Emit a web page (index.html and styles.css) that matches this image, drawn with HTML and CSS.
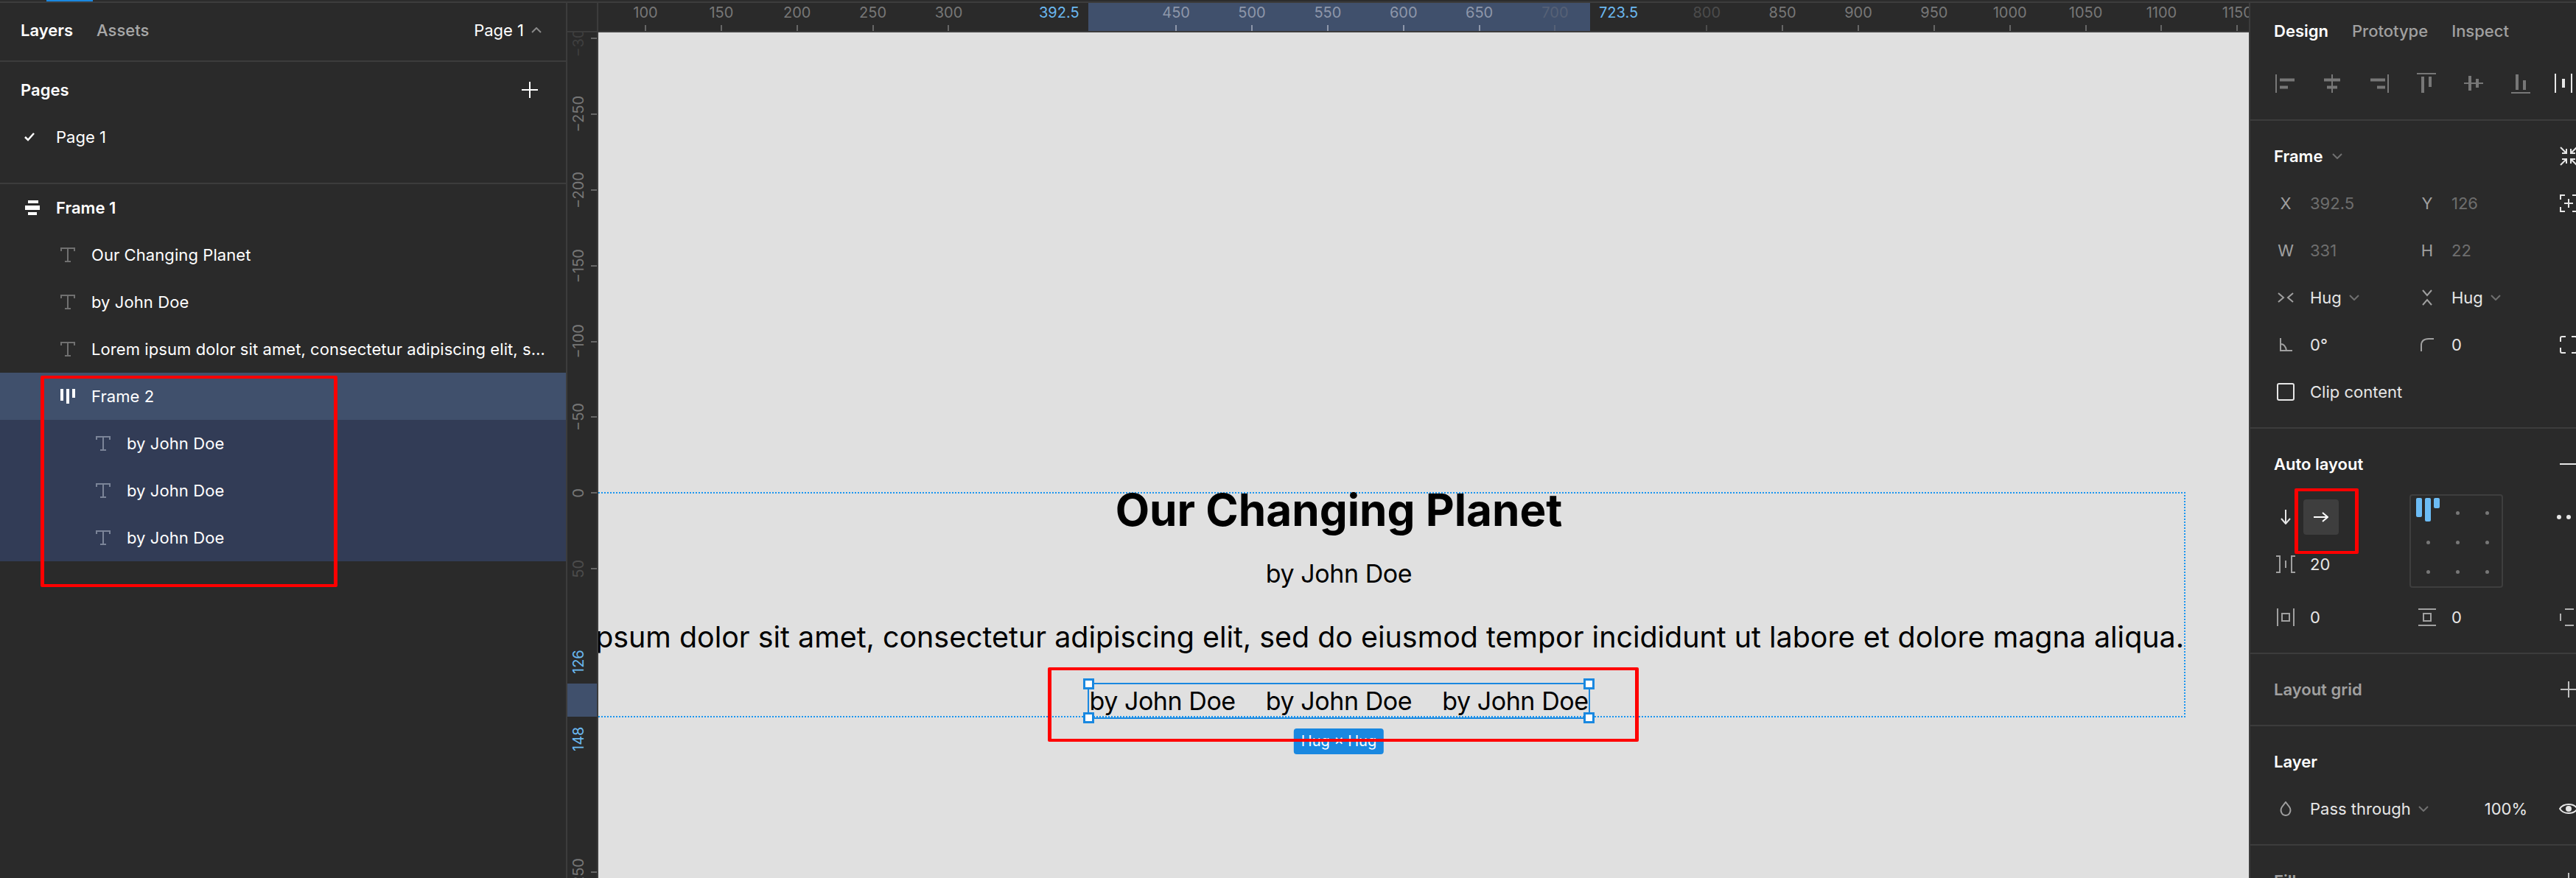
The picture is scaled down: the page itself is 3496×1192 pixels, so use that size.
FILE: index.html
```html
<!DOCTYPE html>
<html lang="en">
<head>
    <meta charset="UTF-8">
    <title>Auto layout - Frame 2</title>
    <link rel="stylesheet" href="styles.css">
</head>
<body>

<svg class="sprites" width="0" height="0">
    <symbol id="ico-t" viewBox="0 0 20 20"><path d="M1 5V1H19V5M10 1V19M6 19H14" fill="none" stroke="currentColor" stroke-width="2"/></symbol>
    <symbol id="ico-chev" viewBox="0 0 14 8"><path d="M1 1L7 7L13 1" fill="none" stroke="currentColor" stroke-width="2"/></symbol>
    <symbol id="ico-plus" viewBox="0 0 22 22"><path d="M11 0V22M0 11H22" fill="none" stroke="currentColor" stroke-width="2"/></symbol>
</svg>

<div class="app">
    <div class="topline"><div class="topline-tab"></div></div>

    <div class="main">
        <!-- left panel -->
        <aside class="left-panel">
            <div class="left-tabs">
                <span class="tab-active">Layers</span>
                <span class="tab-dim">Assets</span>
                <span class="page-pick">Page 1
                    <svg class="caret" width="14" height="8"><use href="#ico-chev" transform="rotate(180 7 4)"/></svg>
                </span>
            </div>

            <div class="pages">
                <div class="pages-head">
                    <span class="tab-active">Pages</span>
                    <svg class="pages-add" width="22" height="22"><use href="#ico-plus"/></svg>
                </div>
                <div class="layer-row">
                    <svg class="check" width="16" height="12" viewBox="0 0 16 12"><path d="M2 6L6 10L14 1" fill="none" stroke="#fff" stroke-width="2.5"/></svg>
                    <span>Page 1</span>
                </div>
            </div>

            <div class="layer-row layer-root">
                <svg class="row-ico" width="20" height="20" viewBox="0 0 20 20"><path d="M4 0H18V4H4ZM0 7H20V13H0ZM4 16H16V20H4Z" fill="#fff"/></svg>
                <span class="tab-active">Frame 1</span>
            </div>
            <div class="layer-row depth-1"><svg class="row-ico t-ico" width="20" height="20"><use href="#ico-t"/></svg><span class="layer-name">Our Changing Planet</span></div>
            <div class="layer-row depth-1"><svg class="row-ico t-ico" width="20" height="20"><use href="#ico-t"/></svg><span class="layer-name">by John Doe</span></div>
            <div class="layer-row depth-1"><svg class="row-ico t-ico" width="20" height="20"><use href="#ico-t"/></svg><span class="layer-name">Lorem ipsum dolor sit amet, consectetur adipiscing elit, sed do eiusmod tempor</span></div>
            <div class="layer-row depth-1 row-selected">
                <svg class="row-ico" width="20" height="20" viewBox="0 0 20 20"><path d="M0 0H4V16H0ZM8 0H12V20H8ZM16 0H20V12H16Z" fill="#fff"/></svg>
                <span class="layer-name">Frame 2</span>
            </div>
            <div class="layer-row depth-2 row-child"><svg class="row-ico t-ico" width="20" height="20"><use href="#ico-t"/></svg><span class="layer-name">by John Doe</span></div>
            <div class="layer-row depth-2 row-child"><svg class="row-ico t-ico" width="20" height="20"><use href="#ico-t"/></svg><span class="layer-name">by John Doe</span></div>
            <div class="layer-row depth-2 row-child"><svg class="row-ico t-ico" width="20" height="20"><use href="#ico-t"/></svg><span class="layer-name">by John Doe</span></div>
        </aside>

        <!-- rulers and canvas -->
        <section class="center">
            <div class="ruler-top">
                <div class="ruler-corner"></div>
                <div class="ruler-band"></div>
                <span class="ruler-sel sel-start">392.5</span>
                <span class="ruler-sel sel-end">723.5</span>
                <div class="rt-cell"><span>100</span><i></i></div>
                <div class="rt-cell"><span>150</span><i></i></div>
                <div class="rt-cell"><span>200</span><i></i></div>
                <div class="rt-cell"><span>250</span><i></i></div>
                <div class="rt-cell"><span>300</span><i></i></div>
                <div class="rt-cell rt-empty"></div>
                <div class="rt-cell rt-empty"></div>
                <div class="rt-cell in-band"><span>450</span><i></i></div>
                <div class="rt-cell in-band"><span>500</span><i></i></div>
                <div class="rt-cell in-band"><span>550</span><i></i></div>
                <div class="rt-cell in-band"><span>600</span><i></i></div>
                <div class="rt-cell in-band"><span>650</span><i></i></div>
                <div class="rt-cell in-band faded"><span>700</span><i></i></div>
                <div class="rt-cell rt-empty"></div>
                <div class="rt-cell faded"><span>800</span><i></i></div>
                <div class="rt-cell"><span>850</span><i></i></div>
                <div class="rt-cell"><span>900</span><i></i></div>
                <div class="rt-cell"><span>950</span><i></i></div>
                <div class="rt-cell"><span>1000</span><i></i></div>
                <div class="rt-cell"><span>1050</span><i></i></div>
                <div class="rt-cell"><span>1100</span><i></i></div>
                <div class="rt-cell"><span>1150</span><i></i></div>
            </div>

            <div class="center-body">
                <div class="ruler-left">
                    <div class="ruler-left-band"></div>
                    <span class="ruler-left-sel sel-126">126</span>
                    <span class="ruler-left-sel sel-148">148</span>
                    <div class="rl-cell rl-dimmest"><span>&minus;300</span><i></i></div>
                    <div class="rl-cell"><span>&minus;250</span><i></i></div>
                    <div class="rl-cell"><span>&minus;200</span><i></i></div>
                    <div class="rl-cell"><span>&minus;150</span><i></i></div>
                    <div class="rl-cell"><span>&minus;100</span><i></i></div>
                    <div class="rl-cell"><span>&minus;50</span><i></i></div>
                    <div class="rl-cell"><span>0</span><i></i></div>
                    <div class="rl-cell faded"><span>50</span><i></i></div>
                    <div class="rl-cell"></div>
                    <div class="rl-cell"></div>
                    <div class="rl-cell"></div>
                    <div class="rl-cell"><span>250</span><i></i></div>
                </div>

                <div class="canvas">
                    <div class="frame-one">
                        <div class="frame-title">Our Changing Planet</div>
                        <div class="frame-text">by John Doe</div>
                        <div class="frame-text frame-lorem">Lorem ipsum dolor sit amet, consectetur adipiscing elit, sed do eiusmod tempor incididunt ut labore et dolore magna aliqua.</div>
                        <div class="frame-two">
                            <span class="frame-text">by John Doe</span>
                            <span class="frame-text">by John Doe</span>
                            <span class="frame-text">by John Doe</span>
                            <b class="handle h-tl"></b>
                            <b class="handle h-tr"></b>
                            <b class="handle h-bl"></b>
                            <b class="handle h-br"></b>
                            <div class="size-badge">Hug × Hug</div>
                        </div>
                    </div>
                </div>
            </div>
        </section>

        <!-- right panel -->
        <aside class="right-panel">
            <div class="right-tabs">
                <span class="tab-active">Design</span>
                <span class="tab-soft">Prototype</span>
                <span class="tab-soft">Inspect</span>
            </div>

            <div class="align-bar section">
                <svg class="align-ico" width="28" height="28" viewBox="0 0 28 28"><path d="M1 2H3V27H1ZM7 7.500H27V11.500H7ZM7 17.500H18V21.500H7Z"/></svg>
                <svg class="align-ico" width="28" height="28" viewBox="0 0 28 28"><path d="M13 2H15V7.500H25V11.500H15V17.500H21V21.500H15V27H13V21.500H7V17.500H13V11.500H3V7.500H13Z"/></svg>
                <svg class="align-ico" width="28" height="28" viewBox="0 0 28 28"><path d="M25 2H27V27H25ZM2 7.500H22V11.500H2ZM11 17.500H22V21.500H11Z"/></svg>
                <svg class="align-ico" width="28" height="28" viewBox="0 0 28 28"><path d="M1 0H27V2H1ZM7 5H11V27H7ZM17 5H21V19H17Z"/></svg>
                <svg class="align-ico" width="28" height="28" viewBox="0 0 28 28"><path d="M1 13H7V4H11V13H17V8H21V13H27V15H21V20H17V15H11V24H7V15H1Z"/></svg>
                <svg class="align-ico" width="28" height="28" viewBox="0 0 28 28"><path d="M1 26H27V28H1ZM7 2H11V23H7ZM17 10H21V23H17Z"/></svg>
                <svg class="align-ico dist-ico" width="36" height="28" viewBox="0 0 36 28"><path d="M0 1H2V27H0ZM10 8H14V20H10ZM22 1H24V27H22ZM32 8H36V20H32Z"/></svg>
            </div>

            <div class="section">
                <div class="prop-row">
                    <div class="prop-cell span-two">
                        <span class="sec-title">Frame</span>
                        <svg class="chev title-chev" width="14" height="8"><use href="#ico-chev"/></svg>
                    </div>
                    <div class="ico-box">
                        <svg width="24" height="26" viewBox="0 0 24 26"><path d="M1 1L9 9M3 9H9V3M23 1L15 9M21 9H15V3M1 25L9 17M3 17H9V23M23 25L15 17M21 17H15V23" fill="none" stroke="#e6e6e6" stroke-width="2"/></svg>
                    </div>
                </div>
                <div class="prop-row">
                    <div class="prop-cell"><span class="ico-box ico-letter">X</span><span class="val-dim">392.5</span></div>
                    <div class="prop-cell"><span class="ico-box ico-letter">Y</span><span class="val-dim">126</span></div>
                    <div class="ico-box">
                        <svg width="24" height="24" viewBox="0 0 24 24"><path d="M1 7V1H7M17 1H23V7M1 17V23H7M17 23H23V17M12 6V18M6 12H18" fill="none" stroke="#e6e6e6" stroke-width="2"/></svg>
                    </div>
                </div>
                <div class="prop-row">
                    <div class="prop-cell"><span class="ico-box ico-letter">W</span><span class="val-dim">331</span></div>
                    <div class="prop-cell"><span class="ico-box ico-letter">H</span><span class="val-dim">22</span></div>
                </div>
                <div class="prop-row">
                    <div class="prop-cell">
                        <span class="ico-box"><svg width="22" height="14" viewBox="0 0 22 14"><path d="M1 1L8 7L1 13M21 1L14 7L21 13" fill="none" stroke="#a0a0a0" stroke-width="2"/></svg></span>
                        <span class="val">Hug</span>
                        <svg class="chev hug-chev" width="14" height="8"><use href="#ico-chev"/></svg>
                    </div>
                    <div class="prop-cell">
                        <span class="ico-box"><svg width="14" height="22" viewBox="0 0 14 22"><path d="M1 1L7 8L13 1M1 21L7 14L13 21" fill="none" stroke="#a0a0a0" stroke-width="2"/></svg></span>
                        <span class="val">Hug</span>
                        <svg class="chev hug-chev" width="14" height="8"><use href="#ico-chev"/></svg>
                    </div>
                </div>
                <div class="prop-row">
                    <div class="prop-cell">
                        <span class="ico-box"><svg width="18" height="18" viewBox="0 0 18 18"><path d="M2 0V17H18M2 8C6 8 9 11 10 17" fill="none" stroke="#a0a0a0" stroke-width="2"/></svg></span>
                        <span class="val">0°</span>
                    </div>
                    <div class="prop-cell">
                        <span class="ico-box"><svg width="18" height="18" viewBox="0 0 18 18"><path d="M1 18V10C1 4 5 1 11 1H18" fill="none" stroke="#a0a0a0" stroke-width="2"/></svg></span>
                        <span class="val">0</span>
                    </div>
                    <div class="ico-box">
                        <svg width="24" height="24" viewBox="0 0 24 24"><path d="M1 8V3Q1 1 3 1H8M16 1H21Q23 1 23 3V8M1 16V21Q1 23 3 23H8M16 23H21Q23 23 23 21V16" fill="none" stroke="#e6e6e6" stroke-width="2"/></svg>
                    </div>
                </div>
                <div class="prop-row">
                    <div class="prop-cell span-two">
                        <span class="ico-box"><span class="checkbox"></span></span>
                        <span class="val">Clip content</span>
                    </div>
                </div>
            </div>

            <div class="section">
                <div class="prop-row">
                    <div class="prop-cell span-two"><span class="sec-title">Auto layout</span></div>
                    <div class="ico-box"><svg width="24" height="2" viewBox="0 0 24 2"><path d="M0 0H24V2H0Z" fill="#e6e6e6"/></svg></div>
                </div>
                <div class="auto-body">
                    <div class="auto-left">
                        <div class="dir-row">
                            <span class="ico-box"><svg width="14" height="20" viewBox="0 0 14 20"><path d="M7 0V18M1 12L7 19L13 12" fill="none" stroke="#e6e6e6" stroke-width="2"/></svg></span>
                            <span class="dir-btn"><svg width="20" height="14" viewBox="0 0 20 14"><path d="M0 7H18M12 1L19 7L12 13" fill="none" stroke="#fff" stroke-width="2"/></svg></span>
                        </div>
                        <div class="prop-cell gap-cell">
                            <span class="ico-box"><svg width="26" height="24" viewBox="0 0 26 24"><path d="M0 1H5V23H0M26 1H21V23H26" fill="none" stroke="#a0a0a0" stroke-width="2"/><path d="M12 7H14V17H12Z" fill="#a0a0a0"/></svg></span>
                            <span class="val">20</span>
                        </div>
                    </div>
                    <div class="align-box">
                        <div class="align-cell cell-bars"><b class="bar-a"></b><b class="bar-b"></b><b class="bar-c"></b></div>
                        <div class="align-cell"><i></i></div>
                        <div class="align-cell"><i></i></div>
                        <div class="align-cell"><i></i></div>
                        <div class="align-cell"><i></i></div>
                        <div class="align-cell"><i></i></div>
                        <div class="align-cell"><i></i></div>
                        <div class="align-cell"><i></i></div>
                        <div class="align-cell"><i></i></div>
                    </div>
                    <div class="more-dots"><i></i><i></i><i></i></div>
                </div>
                <div class="prop-row pad-row">
                    <div class="prop-cell">
                        <span class="ico-box"><svg width="24" height="24" viewBox="0 0 24 24"><path d="M1 0V24M23 0V24M7 7H17V17H7Z" fill="none" stroke="#a0a0a0" stroke-width="2"/></svg></span>
                        <span class="val">0</span>
                    </div>
                    <div class="prop-cell">
                        <span class="ico-box"><svg width="24" height="24" viewBox="0 0 24 24"><path d="M0 1H24M0 23H24M7 7H17V17H7Z" fill="none" stroke="#a0a0a0" stroke-width="2"/></svg></span>
                        <span class="val">0</span>
                    </div>
                    <div class="ico-box">
                        <svg width="24" height="24" viewBox="0 0 24 24"><path d="M7 1H19M7 23H19M1 7V17M23 7V17" fill="none" stroke="#b0b0b0" stroke-width="2"/></svg>
                    </div>
                </div>
            </div>

            <div class="section">
                <div class="prop-row">
                    <div class="prop-cell span-two"><span class="sec-title title-dim">Layout grid</span></div>
                    <div class="ico-box"><svg class="plus-ico" width="22" height="22"><use href="#ico-plus"/></svg></div>
                </div>
            </div>

            <div class="section">
                <div class="prop-row">
                    <div class="prop-cell span-two"><span class="sec-title">Layer</span></div>
                </div>
                <div class="prop-row">
                    <div class="prop-cell span-two">
                        <span class="ico-box"><svg width="16" height="20" viewBox="0 0 16 20"><path d="M8 1L13 7.500C16 11.500 14 19 8 19C2 19 0 11.500 3 7.500Z" fill="none" stroke="#a0a0a0" stroke-width="2"/></svg></span>
                        <span class="val">Pass through</span>
                        <svg class="chev hug-chev" width="14" height="8"><use href="#ico-chev"/></svg>
                        <span class="val opacity-val">100%</span>
                    </div>
                    <div class="ico-box">
                        <svg width="26" height="16" viewBox="0 0 26 16"><path d="M1 8C6 0 20 0 25 8C20 16 6 16 1 8Z" fill="none" stroke="#e6e6e6" stroke-width="2"/><circle cx="13" cy="8" r="4" fill="#e6e6e6"/></svg>
                    </div>
                </div>
            </div>

            <div class="section">
                <div class="prop-row">
                    <div class="prop-cell span-two"><span class="sec-title title-dim">Fill</span></div>
                    <div class="ico-box"><svg class="plus-ico" width="22" height="22"><use href="#ico-plus"/></svg></div>
                </div>
            </div>
        </aside>
    </div>

    <!-- red annotation boxes -->
    <div class="mark mark-layers"></div>
    <div class="mark mark-row"></div>
    <div class="mark mark-dir"></div>
</div>

</body>
</html>
```

FILE: styles.css
```css
* {
    box-sizing: border-box;
}
body {
    margin: 0;
    overflow: hidden;
    background: #2c2c2c;
    font-family: Inter, "Noto Sans", sans-serif;
    font-size: 22px;
    color: #fff;
}
.sprites {
    position: absolute;
}
.app {
    position: relative;
    width: 3496px;
    height: 1192px;
    overflow: hidden;
    display: flex;
    flex-direction: column;
}
.topline {
    height: 4px;
    flex-shrink: 0;
    background: #2c2c2c;
    border-bottom: 2px solid #3c3c3c;
    padding-left: 63px;
}
.topline-tab {
    width: 63px;
    height: 2px;
    background: #1a88e0;
}
.main {
    flex: 1;
    display: flex;
    min-height: 0;
}

/* left panel */
.left-panel {
    width: 770px;
    flex-shrink: 0;
    background: #2a2a2a;
    border-right: 2px solid #3c3c3c;
}
.left-tabs {
    height: 80px;
    display: flex;
    align-items: center;
    gap: 32px;
    padding: 0 33px 4px 28px;
    border-bottom: 2px solid #3c3c3c;
}
.tab-active {
    font-weight: 600;
}
.tab-dim {
    font-weight: 500;
    color: #a8a8a8;
}
.page-pick {
    margin-left: auto;
    display: flex;
    align-items: center;
    gap: 10px;
}
.caret {
    color: #8a8a8a;
}
.pages {
    padding: 6px 0 30px;
    border-bottom: 2px solid #3c3c3c;
}
.pages-head {
    height: 64px;
    display: flex;
    align-items: center;
    justify-content: space-between;
    padding: 0 38px 0 28px;
}
.pages-add {
    color: #fff;
}
.layer-row {
    height: 64px;
    display: flex;
    align-items: center;
}
.pages .layer-row {
    padding-left: 32px;
    gap: 28px;
}
.layer-root {
    padding-left: 34px;
    gap: 22px;
}
.depth-1 {
    padding-left: 82px;
    padding-right: 28px;
    gap: 22px;
}
.depth-2 {
    padding-left: 130px;
    padding-right: 28px;
    gap: 22px;
}
.row-ico {
    flex-shrink: 0;
}
.t-ico {
    color: #707070;
}
.layer-name {
    min-width: 0;
    white-space: nowrap;
    overflow: hidden;
    text-overflow: ellipsis;
    letter-spacing: 0.08px;
}
.row-selected {
    background: #40506c;
}
.row-child {
    background: #323c56;
}
.row-child .t-ico {
    color: #7b8498;
}

/* rulers */
.center {
    flex: 1;
    min-width: 0;
    display: flex;
    flex-direction: column;
    overflow: hidden;
}
.ruler-top {
    position: relative;
    height: 40px;
    flex-shrink: 0;
    display: flex;
    background: #2a2a2a;
    border-bottom: 2px solid #3c3c3c;
    font-size: 20px;
    color: #777;
}
.ruler-corner {
    width: 42px;
    margin-right: 12.560px;
    flex-shrink: 0;
    border-right: 2px solid #3c3c3c;
}
.ruler-band {
    position: absolute;
    left: 707px;
    top: 0;
    width: 681px;
    height: 38px;
    background: #40506c;
}
.ruler-sel {
    position: absolute;
    top: 0;
    line-height: 26px;
    color: #6bb8f0;
}
.sel-start {
    left: 640px;
}
.sel-end {
    left: 1400px;
}
.rt-cell {
    position: relative;
    width: 102.875px;
    flex-shrink: 0;
    display: flex;
    flex-direction: column;
    align-items: center;
}
.rt-cell span {
    line-height: 26px;
}
.rt-cell i {
    width: 2px;
    height: 8px;
    margin-top: 4px;
    background: #666;
}
.in-band {
    color: #8e97aa;
}
.in-band i {
    background: #8e97aa;
}
.faded {
    color: #4c4c4c;
}
.faded i {
    background: #4c4c4c;
}
.in-band.faded {
    color: #566176;
}
.in-band.faded i {
    background: #566176;
}
.rl-dimmest {
    color: #3f3f3f;
}
.rl-dimmest i {
    background: #3f3f3f;
}
.center-body {
    flex: 1;
    min-height: 0;
    display: flex;
}
.ruler-left {
    position: relative;
    width: 42px;
    flex-shrink: 0;
    overflow: hidden;
    background: #2a2a2a;
    border-right: 2px solid #3c3c3c;
    font-size: 20px;
    color: #777;
}
.ruler-left-band {
    position: absolute;
    left: 0;
    top: 884px;
    width: 40px;
    height: 45px;
    background: #40506c;
}
.ruler-left-sel {
    position: absolute;
    left: 0;
    width: 30px;
    height: 60px;
    line-height: 30px;
    text-align: center;
    writing-mode: vertical-rl;
    transform: rotate(180deg);
    color: #6bb8f0;
}
.sel-126 {
    top: 825px;
}
.sel-148 {
    top: 929px;
}
.rl-cell {
    height: 102.875px;
    display: flex;
    align-items: center;
}
.ruler-left-sel + .rl-cell {
    margin-top: -43.440px;
}
.rl-cell span {
    width: 30px;
    line-height: 30px;
    text-align: center;
    white-space: nowrap;
    writing-mode: vertical-rl;
    transform: rotate(180deg);
}
.rl-cell i {
    width: 8px;
    height: 2px;
    margin-left: 2px;
    background: #666;
}

/* canvas */
.canvas {
    position: relative;
    flex: 1;
    min-width: 0;
    overflow: hidden;
    background: #e0e0e0;
}
.frame-one {
    position: absolute;
    left: -144px;
    top: 624px;
    width: 2298px;
    height: 306px;
    border: 2px dotted #1b96f0;
    display: flex;
    flex-direction: column;
    align-items: center;
    gap: 41.150px;
    color: #000;
}
.frame-title {
    font-size: 60.200px;
    font-weight: 700;
    line-height: 45.270px;
    white-space: nowrap;
}
.frame-text {
    font-size: 34px;
    letter-spacing: -0.44px;
    line-height: 45.270px;
    white-space: nowrap;
}
.frame-lorem {
    font-size: 39.400px;
    letter-spacing: 0;
}
.frame-two {
    position: relative;
    display: flex;
    gap: 41.150px;
    outline: 2px solid #1a88e0;
}
.handle {
    position: absolute;
    width: 15px;
    height: 15px;
    background: #fff;
    border: 3px solid #1a88e0;
}
.h-tl { left: -8px; top: -8px; }
.h-tr { right: -8px; top: -8px; }
.h-bl { left: -8px; bottom: -8px; }
.h-br { right: -8px; bottom: -8px; }
.size-badge {
    position: absolute;
    left: 50%;
    top: 60px;
    transform: translateX(-50%);
    padding: 0 10px;
    height: 35px;
    line-height: 35px;
    border-radius: 4px;
    background: #1a88e0;
    color: #fff;
    font-size: 20px;
    white-space: nowrap;
}

/* right panel */
.right-panel {
    width: 444px;
    flex-shrink: 0;
    overflow: hidden;
    background: #2a2a2a;
    border-left: 2px solid #3c3c3c;
}
.right-tabs {
    height: 76px;
    display: flex;
    align-items: center;
    gap: 32px;
    padding-left: 32px;
}
.tab-soft {
    font-weight: 500;
    color: #a0a0a0;
}
.section {
    padding: 16px 0;
    border-bottom: 2px solid #3c3c3c;
}
.align-bar {
    height: 84px;
    padding: 0 0 0 15px;
    display: flex;
}
.align-ico {
    flex-shrink: 0;
    margin: 19px 18px 0 18px;
    fill: #777;
}
.dist-ico {
    fill: #e6e6e6;
    margin: 19px 0 0 14px;
}
.prop-row {
    height: 64px;
    padding-left: 30px;
    display: grid;
    grid-template-columns: 192px 192px 36px;
    align-items: center;
}
.prop-cell {
    display: flex;
    align-items: center;
}
.span-two {
    grid-column: span 2;
}
.ico-box {
    width: 36px;
    flex-shrink: 0;
    display: flex;
    align-items: center;
    justify-content: center;
    margin-right: 15px;
}
.prop-row > .ico-box {
    margin-right: 0;
    grid-column: 3;
}
.ico-letter {
    color: #a0a0a0;
}
.val {
    color: #e6e6e6;
    white-space: nowrap;
}
.val-dim {
    color: #6e6e6e;
}
.sec-title {
    margin-left: 2px;
    font-weight: 600;
}
.title-dim {
    color: #a0a0a0;
}
.chev {
    color: #707070;
    flex-shrink: 0;
}
.title-chev {
    margin-left: 13px;
}
.hug-chev {
    margin-left: 10px;
}
.checkbox {
    width: 24px;
    height: 24px;
    border: 2px solid #e6e6e6;
    border-radius: 3px;
}
.plus-ico {
    color: #c0c0c0;
}
.opacity-val {
    margin-left: auto;
    margin-right: 38px;
}
.auto-body {
    height: 128px;
    margin-top: 8px;
    padding-left: 30px;
    display: flex;
}
.auto-left {
    width: 186px;
    flex-shrink: 0;
}
.dir-row {
    height: 64px;
    display: flex;
    align-items: center;
    gap: 6px;
}
.dir-row .ico-box {
    margin-right: 0;
}
.dir-btn {
    width: 48px;
    height: 48px;
    border-radius: 4px;
    background: #3e3e3e;
    display: flex;
    align-items: center;
    justify-content: center;
}
.gap-cell {
    height: 64px;
}
.align-box {
    width: 127px;
    height: 127px;
    margin-top: 1px;
    flex-shrink: 0;
    border: 2px solid #3e3e3e;
    border-radius: 4px;
    padding: 3px;
    display: grid;
    grid-template-columns: repeat(3, 40px);
    grid-template-rows: repeat(3, 40px);
}
.align-cell {
    display: flex;
    align-items: center;
    justify-content: center;
}
.align-cell i {
    width: 5px;
    height: 5px;
    border-radius: 50%;
    background: #777;
}
.cell-bars {
    align-items: flex-start;
    gap: 4px;
}
.cell-bars b {
    width: 8px;
    border-radius: 2px;
    background: #6cbcf5;
}
.bar-a { height: 26px; }
.bar-b { height: 32px; }
.bar-c { height: 14px; }
.more-dots {
    height: 64px;
    margin-left: 73px;
    display: flex;
    align-items: center;
    gap: 7px;
    flex-shrink: 0;
}
.more-dots i {
    width: 6px;
    height: 6px;
    border-radius: 50%;
    background: #e6e6e6;
}
.pad-row {
    margin-top: 8px;
}

/* red annotation boxes */
.mark {
    position: absolute;
    border: solid #f00;
    border-width: 4px 5px;
    border-radius: 2px;
}
.mark-layers {
    left: 55px;
    top: 510px;
    width: 403px;
    height: 287px;
}
.mark-row {
    left: 1422px;
    top: 906px;
    width: 802px;
    height: 101px;
}
.mark-dir {
    left: 3114px;
    top: 663px;
    width: 87px;
    height: 89px;
}
```
